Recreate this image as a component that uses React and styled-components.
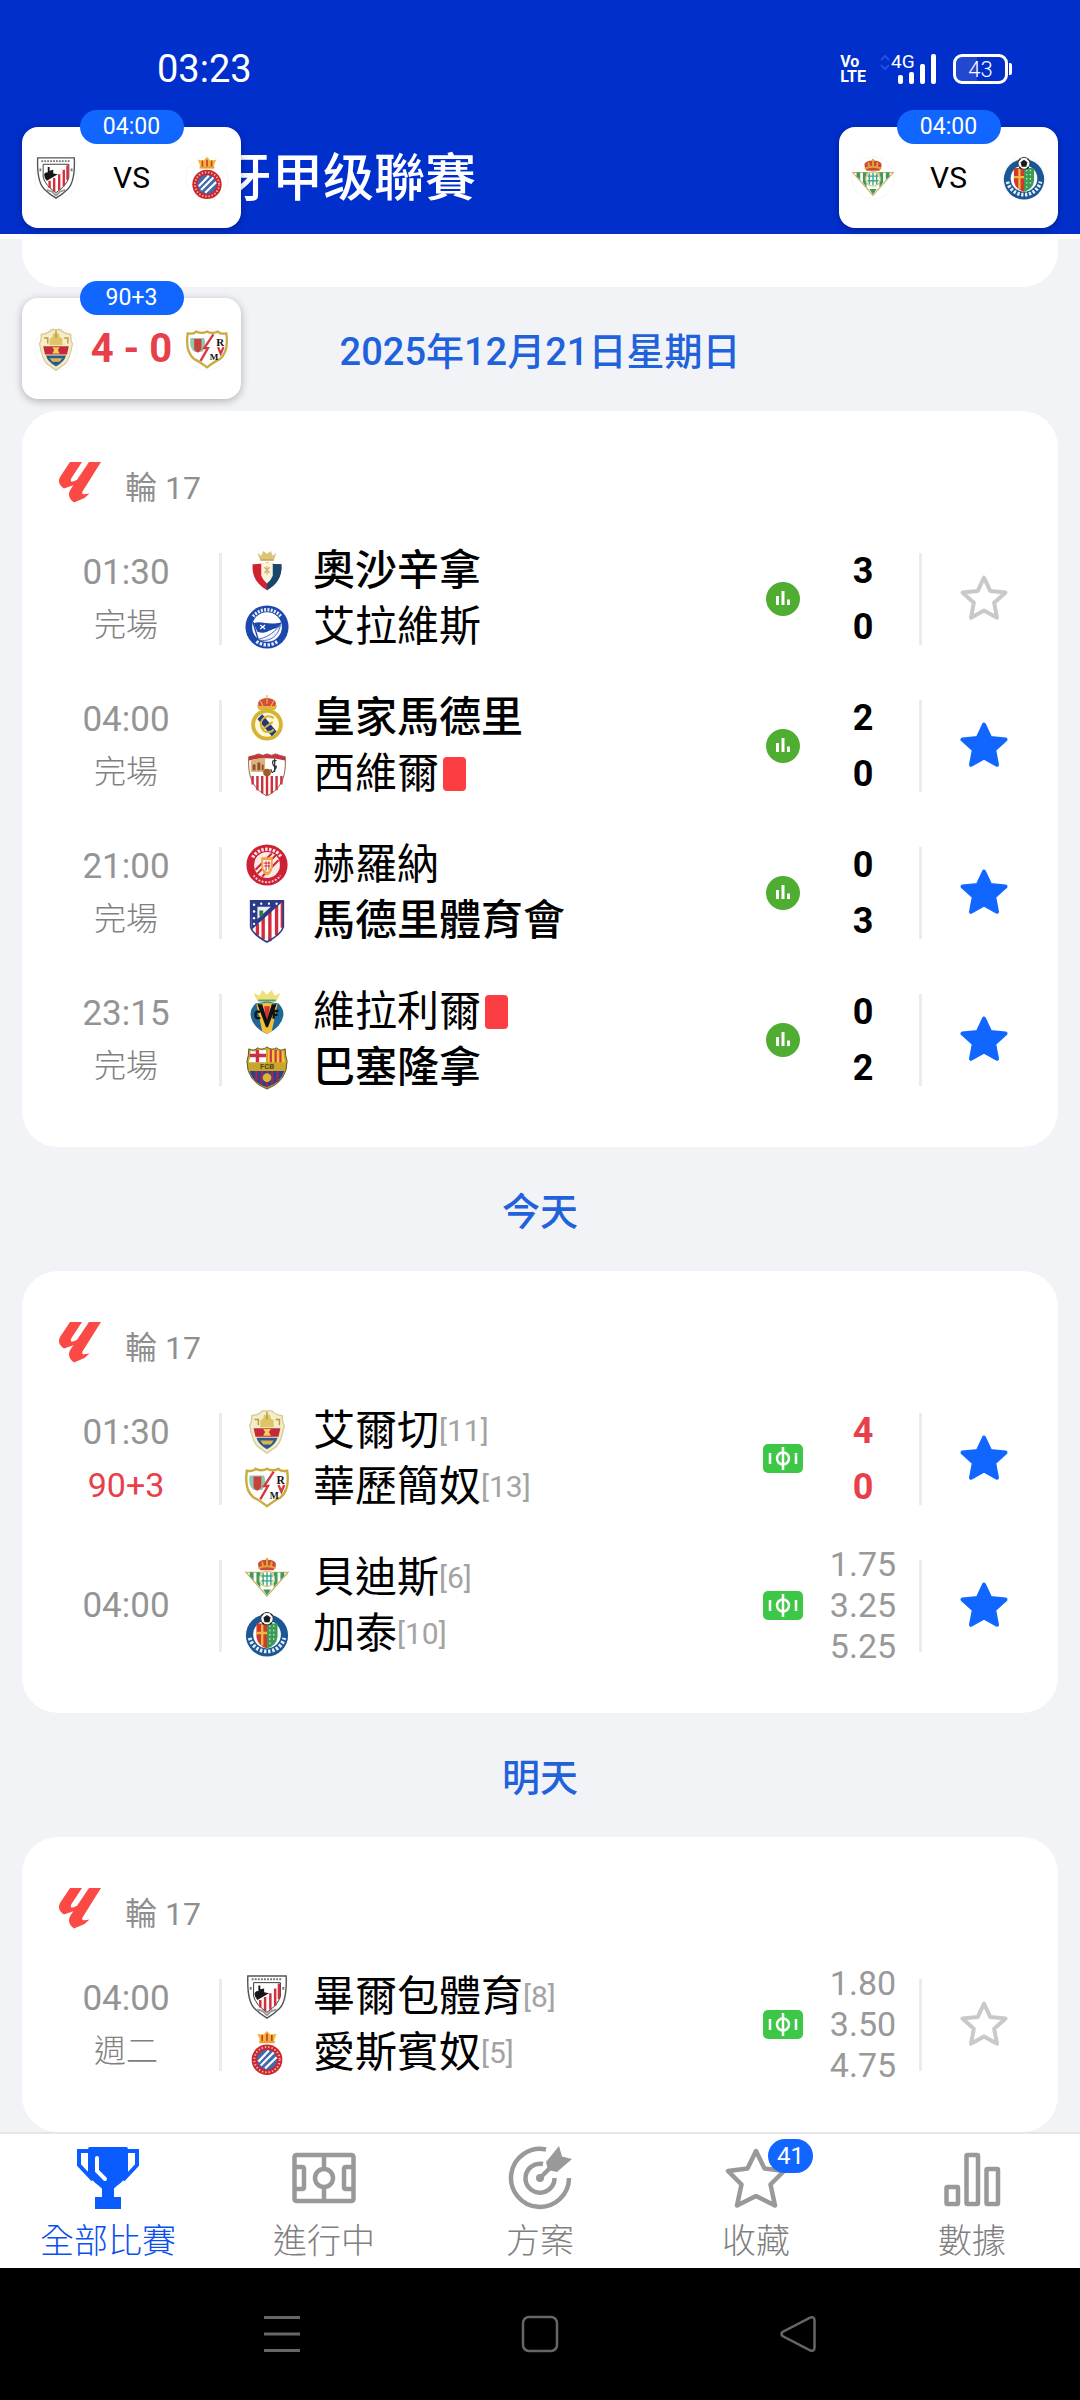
import React from "react";
import styled, { createGlobalStyle } from "styled-components";

const GlobalStyle = createGlobalStyle`
  * {
    box-sizing: border-box;
  }
  body {
    margin: 0;
    background: #f2f3f7;
    font-family: Roboto, "Noto Sans CJK TC", "Noto Sans CJK SC", sans-serif;
    color: #000;
  }
  button {
    border: 0;
    padding: 0;
    background: none;
    color: inherit;
    font: inherit;
    cursor: pointer;
  }
  svg {
    display: block;
  }
`;

const Page = styled.div`
  position: relative;
  display: flex;
  flex-direction: column;
  min-height: 100vh;
`;

/* ---------- header ---------- */

const Header = styled.header`
  background: #002fcc;
  color: #fff;
  padding-bottom: 20px;
`;
const StatusBar = styled.div`
  display: flex;
  align-items: center;
  justify-content: space-between;
  height: 138px;
  padding: 0 68px 0 157px;
`;
const Clock = styled.time`
  font-size: 38px;
  line-height: 40px;
`;
const StatusIcons = styled.div`
  display: flex;
  align-items: center;
`;
const Volte = styled.div`
  font-family: "Liberation Sans Narrow", Roboto, sans-serif;
  font-size: 16px;
  font-weight: 700;
  line-height: 15px;
  margin-right: 14px;
`;
const Signal = styled.div`
  position: relative;
  width: 57px;
  height: 30px;
  margin-right: 16px;
`;
const NetworkType = styled.span`
  position: absolute;
  top: 0;
  left: 11px;
  font-size: 19px;
  line-height: 16px;
`;
const Battery = styled.div`
  display: flex;
  align-items: center;
`;
const BatteryBody = styled.div`
  width: 55px;
  height: 30px;
  border: 3px solid #fff;
  border-radius: 9px;
  font-size: 22px;
  font-weight: 300;
  line-height: 25px;
  text-align: center;
  background: linear-gradient(to right, #2248d2 43%, #002fcc 43%);
`;
const BatteryTip = styled.div`
  width: 3px;
  height: 12px;
  margin-left: 1px;
  border-radius: 0 2px 2px 0;
  background: #fff;
`;
const Title = styled.h1`
  margin: 0;
  padding: 6px 0 0 221px;
  font-size: 51px;
  font-weight: 500;
  line-height: 70px;
`;

/* ---------- floating match widgets ---------- */

const FloatingMatch = styled.button`
  position: absolute;
  top: ${props => props.$top}px;
  ${props => props.$side}: 22px;
  display: flex;
  align-items: center;
  justify-content: space-between;
  width: 219px;
  height: 101px;
  padding: 0 12px;
  border-radius: 16px;
  background: #fff;
  box-shadow: 0 2px 8px rgba(0, 0, 0, 0.28);
`;
const FloatingPill = styled.span`
  position: absolute;
  top: -17px;
  left: 50%;
  width: 104px;
  margin-left: -52px;
  border-radius: 17px;
  background: #1066fe;
  color: #fff;
  font-size: 23px;
  line-height: 34px;
`;
const FloatingText = styled.span`
  font-size: ${props => (props.$live ? 40 : 30)}px;
  font-weight: ${props => (props.$live ? 700 : 400)};
  line-height: 44px;
  color: ${props => (props.$live ? "#e8404a" : "#000")};
`;

/* ---------- match list ---------- */

const Main = styled.main`
  flex: 1;
  padding: 0 22px;
  border-top: 5px solid #fff;
`;
const CardTail = styled.div`
  height: 48px;
  border-radius: 0 0 36px 36px;
  background: #fff;
`;
const DayTitle = styled.h2`
  margin: 0;
  padding: 37px 0 31px;
  text-align: center;
  font-size: 38px;
  font-weight: 500;
  line-height: 56px;
  color: #1f62dc;
`;
const Card = styled.section`
  padding-bottom: 34px;
  border-radius: 36px;
  background: #fff;
`;
const Round = styled.header`
  display: flex;
  align-items: center;
  gap: 23px;
  height: 114px;
  padding: 34px 34px 0;
  font-size: 32px;
  color: #8f8f8f;

  svg {
    margin-bottom: 4px;
  }
`;
const Row = styled.article`
  display: grid;
  grid-template-columns: 197px 3px 1fr 48px 112px 3px 136px;
  align-items: center;
  height: 147px;
`;
const When = styled.div`
  padding-left: 11px;
  text-align: center;
  line-height: 52px;
  color: #949494;
`;
const Kickoff = styled.div`
  font-size: 35px;
`;
const Status = styled.div`
  font-size: ${props => (props.$live ? 34 : 32)}px;
  font-weight: ${props => (props.$live ? 400 : 300)};
  color: ${props => (props.$live ? "#e8404a" : "#808080")};
`;
const Divider = styled.div`
  height: 92px;
  background: #ebebeb;
`;
const Teams = styled.div`
  padding-left: 22px;
`;
const Team = styled.div`
  display: flex;
  align-items: center;
  height: 56px;
  font-size: 42px;
  font-weight: ${props => (props.$winner ? 500 : 400)};
  line-height: 56px;
`;
const TeamName = styled.span`
  margin-left: 23px;
`;
const Rank = styled.span`
  font-size: 30px;
  color: #a3a3a3;
`;
const RedCard = styled.span`
  width: 23px;
  height: 34px;
  margin-left: 4px;
  border-radius: 4px;
  background: #fc3d42;
`;
const IconCell = styled.div`
  display: flex;
  justify-content: center;
`;
const Score = styled.div`
  text-align: center;
  font-size: 36px;
  font-weight: 700;
  line-height: 56px;
  color: ${props => (props.$live ? "#e8404a" : "#000")};
`;
const Odds = styled.div`
  text-align: center;
  font-size: 34px;
  line-height: 41px;
  color: #999;
`;
const StarButton = styled.button`
  display: flex;
  justify-content: center;
  padding: 0 12px 4px 0;
`;

/* ---------- bottom bars ---------- */

const TabBar = styled.nav`
  display: grid;
  grid-template-columns: repeat(5, 1fr);
  height: 136px;
  border-top: 2px solid #e6e6e6;
  background: #fff;
`;
const Tab = styled.a`
  display: flex;
  flex-direction: column;
  align-items: center;
  padding-top: 12px;
  text-decoration: none;
  font-size: 34px;
  font-weight: 300;
  line-height: 50px;
  color: ${props => (props.$active ? "#0a50ef" : "#808080")};
`;
const TabIcon = styled.span`
  position: relative;
  margin-bottom: 6px;
`;
const Badge = styled.span`
  position: absolute;
  top: -7px;
  left: 44px;
  width: 45px;
  border-radius: 17px;
  background: #1066fe;
  color: #fff;
  font-size: 24px;
  font-weight: 400;
  line-height: 34px;
  text-align: center;
`;
const SystemBar = styled.nav`
  display: flex;
  align-items: center;
  justify-content: center;
  gap: 220px;
  height: 132px;
  background: #000;
`;

/* ---------- icons ---------- */

const StarIcon = ({ on }) => (
  <svg width="50" height="48" viewBox="0 0 50 48">
    <path
      d="M25 4.500l6.200 13.400 15.300 1.700-11.300 10.200 2.800 15L25 37.600 12 44.800l2.800-15L3.500 19.600l15.300-1.700z"
      fill={on ? "#1066fe" : "none"}
      stroke={on ? "#1066fe" : "#c9c9c9"}
      strokeWidth="4"
      strokeLinejoin="round"
    />
  </svg>
);

const StatsIcon = () => (
  <svg width="34" height="34" viewBox="0 0 34 34">
    <circle cx="17" cy="17" r="17" fill="#4fae31" />
    <g stroke="#fff" strokeWidth="3">
      <path d="M11.500 14v9" />
      <path d="M17 9v14" />
      <path d="M22.500 17.500V23" />
    </g>
  </svg>
);

const PitchIcon = () => (
  <svg width="40" height="29" viewBox="0 0 40 29">
    <rect width="40" height="29" rx="5" fill="#3cc846" />
    <g fill="none" stroke="#fff" strokeWidth="2.500">
      <circle cx="20" cy="14.500" r="6" />
      <path d="M20 3v23M7 9v11M33 9v11" />
    </g>
  </svg>
);

const LeagueIcon = () => (
  <svg width="46" height="44" viewBox="0 0 46 44">
    <g fill="#fb4a45">
      <path d="M14 1h12L15.500 17c-1.500 3-.5 4 1.500 3.500l5-2L18 24 8 27.500C4 25 1.500 21 4 16z" />
      <path d="M33 1h12L26.500 30.500c-1 2 0 3 2 2.800l5-.8-5 4.500-10.500 4.500c-3-2-5-5-5-8 0-2 .5-3 1.500-5z" />
    </g>
  </svg>
);

const SignalIcon = () => (
  <svg width="57" height="30" viewBox="0 0 57 30">
    <g fill="none" stroke="#2450dc" strokeWidth="2">
      <path d="M1 6l4-4 4 4M1 11l4 4 4-4" />
    </g>
    <g fill="#fff">
      <rect x="18" y="21" width="5" height="9" rx="2" />
      <rect x="29" y="18" width="5" height="12" rx="2" />
      <rect x="40" y="10" width="5" height="20" rx="2" />
      <rect x="51" y="0" width="5" height="30" rx="2" />
    </g>
  </svg>
);

const TrophyIcon = () => (
  <svg width="64" height="64" viewBox="0 0 64 64">
    <path d="M14 5H3v14l14 15M50 5h11v14L47 34" fill="none" stroke="#0a5cff" strokeWidth="4" />
    <path
      d="M12 3q0-2 2-2h36q2 0 2 2v24c-1 7-14 14-14 16v8h7v12H19V51h7v-8c0-2-13-9-14-16z"
      fill="#0a5cff"
    />
    <path d="M21 12v13l8 8" fill="none" stroke="#fff" strokeWidth="4" strokeLinecap="round" />
  </svg>
);

const FieldIcon = () => (
  <svg width="64" height="64" viewBox="0 0 64 64">
    <g fill="none" stroke="#999" strokeWidth="4.500">
      <rect x="2.500" y="9" width="59" height="46" rx="2" />
      <path d="M32 9v14M32 41v14M3 21h7q2 0 2 2v18q0 2-2 2H3M61 21h-7q-2 0-2 2v18q0 2 2 2h7" />
      <circle cx="32" cy="32" r="9" />
    </g>
  </svg>
);

const TargetIcon = () => (
  <svg width="64" height="64" viewBox="0 0 64 64">
    <g fill="none" stroke="#999" strokeWidth="4.500">
      <path d="M38 3.500A29 29 0 1 0 61 32" />
      <path d="M35 18a14.500 14.500 0 1 0 11.500 14" />
      <path d="M31 33L44 20" />
    </g>
    <circle cx="32" cy="32" r="4" fill="#999" />
    <path d="M38 16L51 0l3 10.500L64 13 49 26l-9-2z" fill="#999" />
  </svg>
);

const FavoriteIcon = () => (
  <svg width="64" height="64" viewBox="0 0 64 64">
    <path
      d="M32 5l8.500 17.500L60 25 46.500 38.500 51 59.500 32 50 13 59.500l4.500-21L4 25l19.500-2.500z"
      fill="none"
      stroke="#999"
      strokeWidth="4.500"
      strokeLinejoin="round"
    />
  </svg>
);

const DataIcon = () => (
  <svg width="64" height="64" viewBox="0 0 64 64">
    <g fill="none" stroke="#999" strokeWidth="4.500">
      <rect x="6.500" y="41" width="11.500" height="17" rx="1" />
      <rect x="26.500" y="9" width="11.500" height="49" rx="1" />
      <rect x="46.500" y="23" width="11.500" height="35" rx="1" />
    </g>
  </svg>
);

/* ---------- crests, all drawn on a 48 grid ---------- */

const crests = {
  osasuna: (
    <>
      <path d="M14 5l4 3 2-5 4 3 4-3 2 5 4-3-3 8H17z" fill="#dcc47c" />
      <path d="M17 12.500h14" stroke="#c9a54a" strokeWidth="1.500" />
      <path d="M9 17q8 0 15-2 7 2 15 2c1 12-4 21-15 27C13 38 8 29 9 17z" fill="#cf2230" />
      <path d="M24 15q7 2 15 2c1 12-4 21-15 27z" fill="#15486f" />
      <path d="M18 16l6-1 6 1v13q-2 5-6 8-4-3-6-8z" fill="#fbf3dd" />
      <path d="M21 20l6 6M27 20l-6 6M24 19v9" stroke="#cdb065" strokeWidth="1.300" />
    </>
  ),
  alaves: (
    <>
      <circle cx="24" cy="24" r="22.500" fill="#1c48ae" />
      <path d="M9.500 13A18.500 18.500 0 0 1 38.500 13" fill="none" stroke="#e6edfb" strokeWidth="3.500" strokeDasharray="2 1.400" />
      <path d="M13 39A18.500 18.500 0 0 0 35 39" fill="none" stroke="#e6edfb" strokeWidth="3.500" strokeDasharray="2.500 1.600" />
      <circle cx="24" cy="24" r="15.500" fill="#fff" />
      <path d="M10 20c9-3 15 3 29-1-1 6-7 6-13 9-5 3-8 2-12 1z" fill="#1c48ae" />
      <path d="M14 37c9-2 15-5 24-15-2 11-10 17-20 16z" fill="#edf2fd" stroke="#1c48ae" strokeWidth="0.800" />
      <path d="M17 22l5 4M22 22l-5 4" stroke="#fff" strokeWidth="1.300" />
      <path d="M9.500 19L15 38" stroke="#1c48ae" strokeWidth="1.500" />
    </>
  ),
  realmadrid: (
    <>
      <path d="M15 11c-2-6 5-8 9-8s11 2 9 8l-2 4H17z" fill="#d84a3e" />
      <path d="M14 11c1 1 3 1 3 1h14s2 0 3-1l-2 4H16zM24 0v9M17 6l3 6M31 6l-3 6" fill="#dcb63e" stroke="#dcb63e" strokeWidth="1.300" />
      <circle cx="24" cy="31" r="14.500" fill="#fff8d8" stroke="#d4b433" strokeWidth="4" />
      <path d="M14 25l5-5 15 18-5 5z" fill="#26387c" />
      <path d="M31 24c-8-5-15 2-13 9s10 7 13 3M19 36l11-8" fill="none" stroke="#d4b433" strokeWidth="2.200" />
    </>
  ),
  sevilla: (
    <>
      <path d="M5 6q6-1 10-3 5 3 9 0 5 3 9 0 5 2 10 3c1 18-2 32-19 41C7 38 4 24 5 6z" fill="#fff" stroke="#8f5a3c" strokeWidth="1" />
      <path d="M5 6q6-1 10-3 5 3 9 0 5 3 9 0 5 2 10 3v4Q24 5 5 10z" fill="#c5353c" />
      <path d="M7 10q8-3 15-3v15H7z" fill="#dbb47c" />
      <path d="M9 20v-6h3v6M14 20v-8h3v8M18.500 20v-6h2v6" fill="#8e4f2d" />
      <path d="M34 10q-5-1-4 3t3 3-1 4-4-1M32 8v14" fill="none" stroke="#333" strokeWidth="1.300" />
      <path d="M9 26v9M14 26v15M19 26v18M24 26v20M29 26v18M34 26v15M39 26v9" stroke="#cf2e3c" strokeWidth="2.500" />
      <circle cx="24" cy="22.500" r="4" fill="#a45a28" />
    </>
  ),
  girona: (
    <>
      <circle cx="24" cy="24" r="21.500" fill="#cd2236" />
      <path d="M9 16A17.500 17.500 0 0 1 39 16" fill="none" stroke="#fbe4e6" strokeWidth="3.500" strokeDasharray="2.500 1.500" />
      <path d="M10 35A17.500 17.500 0 0 0 38 35" fill="none" stroke="#f6ccd1" strokeWidth="2" strokeDasharray="2 1.500" />
      <circle cx="24" cy="24" r="13.500" fill="#fbe9ea" />
      <path d="M12 29L29 12M14 33L34 13M19 36l17-17" stroke="#cd2236" strokeWidth="2" />
      <path d="M18 16h12v10q-1 7-6 9-5-2-6-9z" fill="#f0a43c" />
      <path d="M20 19h8v7q-1 4-4 5-3-1-4-5z" fill="#fff" />
      <path d="M20.500 22h7M20.500 25h7M23 20v10M26 20v9" stroke="#cd2236" strokeWidth="1" />
    </>
  ),
  atletico: (
    <>
      <path d="M7 3h34v27q-1 7-17 16Q8 37 7 30z" fill="#fff" />
      <path d="M20 20v23M27 12v33M34 4v35M14 27v12M40 4v27" stroke="#d32a3c" strokeWidth="3.500" />
      <path d="M7 3h34L8 33z" fill="#2b3b88" />
      <path d="M14 9h14L14 22z" fill="#e9f3ea" />
      <path d="M16 19v-6h4v6" fill="#2d7a52" />
      <g fill="#fff">
        <circle cx="10.500" cy="7" r="1.300" />
        <circle cx="18" cy="6" r="1.200" />
        <circle cx="26" cy="6" r="1.200" />
        <circle cx="34" cy="6" r="1.200" />
        <circle cx="10.500" cy="14" r="1.300" />
        <circle cx="10.500" cy="21" r="1.300" />
        <circle cx="10.500" cy="27" r="1.200" />
      </g>
      <path d="M7 3h34v27q-1 7-17 16Q8 37 7 30z" fill="none" stroke="#2b3b88" strokeWidth="1.800" />
    </>
  ),
  villarreal: (
    <>
      <path d="M14 13L10 4l6 3 3-6 5 5 5-5 3 6 6-3-4 9z" fill="#efe07c" />
      <path d="M15 12h18" stroke="#4fa37a" strokeWidth="2" />
      <path d="M12 15l12-2 12 2q6 6 5 13-2 12-17 19Q9 40 7 28q-1-7 5-13z" fill="#1c6896" />
      <path d="M13 16l11-2 11 2-6 28-5 3-5-3z" fill="#f2bf3c" />
      <path d="M21 18l3 22 3-22" fill="#d4313c" />
      <path d="M14 16h5l5 16 5-16h5L25 40h-2z" fill="#121212" />
      <path d="M17 24q-5-2-5 3t5 3M31 31v-8h5M31 27h4" fill="none" stroke="#121212" strokeWidth="2.500" />
    </>
  ),
  barcelona: (
    <>
      <path d="M5 4q5 3 9-1 5 3 10-1 5 4 10 1 4 4 9 1 0 7 2 13 0 21-21 29Q3 38 3 17 5 11 5 4z" fill="#c9a62d" stroke="#5b5522" strokeWidth="1" />
      <path d="M7 6q5 2 8-1 4 1 8 0v13H5q2-6 2-12z" fill="#fff" />
      <path d="M14 5v13M6 11h17" stroke="#cc2f45" strokeWidth="3.500" />
      <path d="M25 5q5 1 8 0 3 3 8 1 0 6 2 12H25z" fill="#f2c83c" />
      <path d="M28 5v13M33 5v13M38 6v12" stroke="#cf3540" strokeWidth="2.300" />
      <path d="M6 27h36q-3 12-18 17Q9 39 6 27z" fill="#26438f" />
      <path d="M13 27v11M35 27v11M24 27v17M18.500 27v14M29.500 27v14" stroke="#982a55" strokeWidth="2.800" />
      <circle cx="24" cy="34" r="4.500" fill="#d9b53a" />
      <text x="24" y="25.500" fontSize="8" fontWeight="700" textAnchor="middle" fill="#4e4a1c">FCB</text>
    </>
  ),
  elche: (
    <>
      <path d="M8 8q8-1 11-5h10q3 4 11 5 0 8 2 10-3 17-8 22l-10 7-10-7Q9 35 6 18q2-2 2-10z" fill="#f5edc7" stroke="#d8cc9a" strokeWidth="1.500" />
      <path d="M17 20v-7l3-2 1-4h6l1 4 3 2v7z" fill="#dfc565" />
      <path d="M24 4v8M11 12h4v6M33 12h4v6" fill="none" stroke="#b9993f" strokeWidth="1.500" />
      <path d="M10 21h28l-2 9H12z" fill="#c42a39" />
      <path d="M20 22h8l-2 3 2 4h-8l2-4z" fill="#f0cf5d" />
      <path d="M13 31h22q-2 7-11 12-9-5-11-12z" fill="#2c5a8c" />
      <path d="M17 34h14l-3 4h-8z" fill="#d9b54c" />
    </>
  ),
  rayo: (
    <>
      <path d="M3 7q7 1 9-2 7 3 12 0 5 3 12 0 2 3 9 2 3 20-7 28-5 2-14 9-9-7-14-9Q0 27 3 7z" fill="#fff" stroke="#c9ab3f" strokeWidth="2.500" />
      <path d="M6 12q-2 10 4 15h9q5-6 2-15" fill="#8fc7b0" />
      <path d="M10 13h8v11q-1 3-4 4-3-1-4-4z" fill="#c8413a" />
      <path d="M31 8L21 23h4L17 37M36 22l3 7 3-7" fill="none" stroke="#d63843" strokeWidth="2.500" />
      <g fontFamily="Liberation Serif, serif" fontWeight="700" fontSize="12" fill="#111">
        <text x="34" y="21">R</text>
        <text x="27" y="36" fontSize="10">M</text>
      </g>
    </>
  ),
  betis: (
    <>
      <path d="M15 12c-2-6 5-7 9-7s11 1 9 7l-2 4H17z" fill="#cf4a35" />
      <path d="M15 14c5-3 13-3 18 0M24 3v9M19 7l1 6M29 7l-1 6" fill="none" stroke="#e0a33d" strokeWidth="2" />
      <path d="M2 18h44L24 43z" fill="#fff" stroke="#c9ae5c" strokeWidth="1.200" />
      <path d="M6 18h4v8L6 22zM13 18h4v16l-4-5zM31 18h4v11l-4 5zM38 18h4v4l-4 4zM20 36h8l-4 6z" fill="#3c9a5d" />
      <circle cx="24" cy="25" r="8" fill="#f8faf0" stroke="#d8c478" strokeWidth="1.200" />
      <path d="M20 19v12M24 18v14M28 19v12M18 22h12M18 27h12" stroke="#3da58d" strokeWidth="1.500" />
    </>
  ),
  getafe: (
    <>
      <circle cx="24" cy="25.500" r="22" fill="#1a5794" />
      <circle cx="24" cy="24.500" r="14.500" fill="#fff" />
      <path d="M13 13h11v26q-10-3-11-12z" fill="#cf3a2c" />
      <path d="M24 13h11v14q-1 9-11 12z" fill="#3d9b58" />
      <path d="M13 23h11M19 14v22" stroke="#edb83f" strokeWidth="2.500" />
      <path d="M27 15v20M31 15v17" stroke="#d7efdb" strokeWidth="1.300" strokeDasharray="1.500 3" />
      <path d="M6 28a18.500 18.500 0 0 0 36 0" fill="none" stroke="#e6eef7" strokeWidth="4" strokeDasharray="2.500 1.800" />
      <circle cx="24" cy="8" r="6.500" fill="#fff" stroke="#333" strokeWidth="1" />
      <path d="M24 5l3 2-1 4h-4l-1-4zM18 5l2-2M28 3l2 2M19 12l2 2M29 12l-2 2" fill="#1b1b1b" stroke="#1b1b1b" strokeWidth="1.300" />
    </>
  ),
  athletic: (
    <>
      <path d="M4 2h40q1 26-7 34-6 6-13 10Q17 42 11 36 3 28 4 2z" fill="#fff" stroke="#555" strokeWidth="1.500" />
      <path d="M8 5.500h32" stroke="#777" strokeWidth="2" strokeDasharray="2 1.200" />
      <path d="M10 9h28v14q-2 9-14 17-12-8-14-17z" fill="#fff" stroke="#333" strokeWidth="1" />
      <path d="M17 27v8M22 24v15M27.500 20v17M32.500 15v18M36.500 10v16" stroke="#d3303f" strokeWidth="2.600" />
      <path d="M11 20q2-3 4-2v-6h2v4l4-1v4l5 1-12 7q-3-3-3-7z" fill="#151515" />
      <path d="M14 37l6 2 4 4 4-4 6-2" fill="none" stroke="#999" strokeWidth="2" />
      <path d="M6 15h2M40 15h2" stroke="#777" strokeWidth="3" />
    </>
  ),
  espanyol: (
    <>
      <path d="M17 12L14 4l6 1 4-4 4 4 6-1-3 8z" fill="#f5b83c" />
      <path d="M19 5v7M24 4v8M29 5v7" stroke="#cf3a2c" strokeWidth="1.800" />
      <path d="M16 12.500h16" stroke="#e8a030" strokeWidth="2.500" />
      <circle cx="24" cy="31" r="16" fill="#cc2431" />
      <circle cx="24" cy="31" r="13.200" fill="none" stroke="#f0b7a0" strokeWidth="2" strokeDasharray="1.500 2" />
      <circle cx="24" cy="31" r="10.500" fill="#3f6aae" />
      <path d="M15 33L26 21.500M17.500 37L31 23.500M22 40L34 28.500" stroke="#fff" strokeWidth="2.300" />
    </>
  )
};

const Crest = ({ id, ring, size = 46 }) => (
  <svg width={size} height={size} viewBox="0 0 48 48">
    {ring && <circle cx="24" cy="24" r="23" fill="#fff" stroke="#f4f4f4" />}
    {crests[id]}
  </svg>
);

/* ---------- data ---------- */

const floating = [
  { top: 127, side: "left", label: "04:00", text: "VS", home: "athletic", away: "espanyol" },
  { top: 127, side: "right", label: "04:00", text: "VS", home: "betis", away: "getafe" },
  { top: 298, side: "left", label: "90+3", text: "4 - 0", home: "elche", away: "rayo", live: true }
];

const days = [
  {
    title: "2025年12月21日星期日",
    matches: [
      {
        time: "01:30",
        status: "完場",
        score: [3, 0],
        teams: [{ id: "osasuna", name: "奧沙辛拿" }, { id: "alaves", name: "艾拉維斯" }]
      },
      {
        time: "04:00",
        status: "完場",
        score: [2, 0],
        starred: true,
        teams: [
          { id: "realmadrid", name: "皇家馬德里" },
          { id: "sevilla", name: "西維爾", red: true }
        ]
      },
      {
        time: "21:00",
        status: "完場",
        score: [0, 3],
        starred: true,
        teams: [{ id: "girona", name: "赫羅納" }, { id: "atletico", name: "馬德里體育會" }]
      },
      {
        time: "23:15",
        status: "完場",
        score: [0, 2],
        starred: true,
        teams: [
          { id: "villarreal", name: "維拉利爾", red: true },
          { id: "barcelona", name: "巴塞隆拿" }
        ]
      }
    ]
  },
  {
    title: "今天",
    matches: [
      {
        time: "01:30",
        status: "90+3",
        live: true,
        score: [4, 0],
        starred: true,
        teams: [
          { id: "elche", name: "艾爾切", rank: 11 },
          { id: "rayo", name: "華歷簡奴", rank: 13 }
        ]
      },
      {
        time: "04:00",
        odds: ["1.75", "3.25", "5.25"],
        starred: true,
        teams: [
          { id: "betis", name: "貝迪斯", rank: 6 },
          { id: "getafe", name: "加泰", rank: 10 }
        ]
      }
    ]
  },
  {
    title: "明天",
    matches: [
      {
        time: "04:00",
        status: "週二",
        odds: ["1.80", "3.50", "4.75"],
        teams: [
          { id: "athletic", name: "畢爾包體育", rank: 8 },
          { id: "espanyol", name: "愛斯賓奴", rank: 5 }
        ]
      }
    ]
  }
];

const tabs = [
  { label: "全部比賽", icon: <TrophyIcon />, active: true },
  { label: "進行中", icon: <FieldIcon /> },
  { label: "方案", icon: <TargetIcon /> },
  { label: "收藏", icon: <FavoriteIcon />, badge: 41 },
  { label: "數據", icon: <DataIcon /> }
];

const Match = ({ match }) => {
  const { time, status, live, score, odds, starred, teams } = match;
  const finished = score && !live;

  return (
    <Row>
      <When>
        <Kickoff>{time}</Kickoff>
        {status && <Status $live={live}>{status}</Status>}
      </When>
      <Divider />
      <Teams>
        {teams.map((team, i) => (
          <Team key={team.id} $winner={finished && score[i] > score[1 - i]}>
            <Crest id={team.id} />
            <TeamName>{team.name}</TeamName>
            {team.rank && <Rank>[{team.rank}]</Rank>}
            {team.red && <RedCard />}
          </Team>
        ))}
      </Teams>
      <IconCell>{finished ? <StatsIcon /> : <PitchIcon />}</IconCell>
      {score ? (
        <Score $live={live}>
          <div>{score[0]}</div>
          <div>{score[1]}</div>
        </Score>
      ) : (
        <Odds>
          {odds.map(odd => (
            <div key={odd}>{odd}</div>
          ))}
        </Odds>
      )}
      <Divider />
      <StarButton aria-label="收藏" aria-pressed={!!starred}>
        <StarIcon on={starred} />
      </StarButton>
    </Row>
  );
};

const App = () => (
  <Page>
    <GlobalStyle />
    <Header>
      <StatusBar>
        <Clock>03:23</Clock>
        <StatusIcons>
          <Volte>
            <div>Vo</div>
            <div>LTE</div>
          </Volte>
          <Signal>
            <SignalIcon />
            <NetworkType>4G</NetworkType>
          </Signal>
          <Battery>
            <BatteryBody>43</BatteryBody>
            <BatteryTip />
          </Battery>
        </StatusIcons>
      </StatusBar>
      <Title>牙甲级聯賽</Title>
    </Header>

    <Main>
      <CardTail />
      {days.map(day => (
        <React.Fragment key={day.title}>
          <DayTitle>{day.title}</DayTitle>
          <Card>
            <Round>
              <LeagueIcon />
              <span>輪 17</span>
            </Round>
            {day.matches.map(match => (
              <Match key={match.teams[0].id} match={match} />
            ))}
          </Card>
        </React.Fragment>
      ))}
    </Main>

    <TabBar>
      {tabs.map(tab => (
        <Tab key={tab.label} href="#" $active={tab.active}>
          <TabIcon>
            {tab.icon}
            {tab.badge && <Badge>{tab.badge}</Badge>}
          </TabIcon>
          {tab.label}
        </Tab>
      ))}
    </TabBar>
    <SystemBar>
      <button aria-label="選單">
        <svg width="38" height="38" viewBox="0 0 38 38">
          <path d="M1 2.500h36M1 19h36M1 35.500h36" stroke="#666" strokeWidth="3" />
        </svg>
      </button>
      <button aria-label="主頁">
        <svg width="38" height="38" viewBox="0 0 38 38">
          <rect x="2" y="2" width="34" height="34" rx="6" fill="none" stroke="#666" strokeWidth="2.500" />
        </svg>
      </button>
      <button aria-label="返回">
        <svg width="38" height="38" viewBox="0 0 38 38">
          <path
            d="M3.500 17q-2 2 0 4l28 14.500q4 1 4-3v-27q0-4-4-3z"
            fill="none"
            stroke="#666"
            strokeWidth="2.500"
          />
        </svg>
      </button>
    </SystemBar>

    {floating.map(item => (
      <FloatingMatch key={item.home} $top={item.top} $side={item.side}>
        <FloatingPill>{item.label}</FloatingPill>
        <Crest id={item.home} ring size={44} />
        <FloatingText $live={item.live}>{item.text}</FloatingText>
        <Crest id={item.away} ring size={44} />
      </FloatingMatch>
    ))}
  </Page>
);

export default App;
